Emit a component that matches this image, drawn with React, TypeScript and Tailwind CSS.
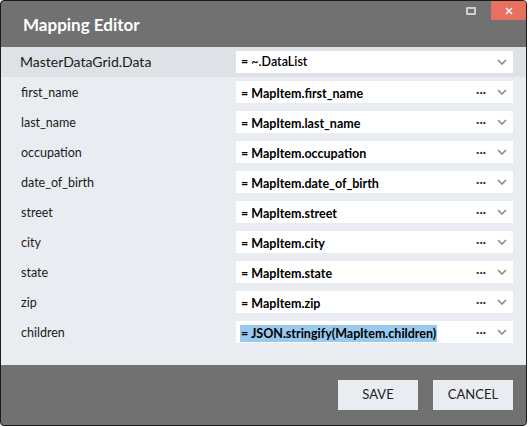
import React from "react";

const rows: { label: string; value: string; selected?: boolean }[] = [
  { label: "first_name", value: "= MapItem.first_name" },
  { label: "last_name", value: "= MapItem.last_name" },
  { label: "occupation", value: "= MapItem.occupation" },
  { label: "date_of_birth", value: "= MapItem.date_of_birth" },
  { label: "street", value: "= MapItem.street" },
  { label: "city", value: "= MapItem.city" },
  { label: "state", value: "= MapItem.state" },
  { label: "zip", value: "= MapItem.zip" },
  { label: "children", value: "= JSON.stringify(MapItem.children)", selected: true },
];

function Chevron() {
  return (
    <svg width="10" height="6" viewBox="0 0 10 6" className="shrink-0">
      <path d="M1 1 L5 5 L9 1" fill="none" stroke="#8a8a8a" strokeWidth="1.6" />
    </svg>
  );
}

export default function App() {
  return (
    <div className="w-[530px] h-[427px] bg-white" style={{ fontFamily: 'Lato, "Noto Sans", sans-serif' }}>
      <div className="w-[527px] h-[426px] border border-[#1c1c1c] rounded-[4px] overflow-hidden flex flex-col bg-[#717171]">
        <div className="h-[46px] flex items-start justify-between shrink-0">
          <div className="pl-[22px] pt-[14px] text-white font-bold text-[17px] leading-[20px]">Mapping Editor</div>
          <div className="flex items-start">
            <div className="w-[40px] h-[19px] flex items-center justify-center">
              <div className="w-[10px] h-[8px] border-2 border-[#cfcfcf] rounded-[1px]" />
            </div>
            <div className="w-[35px] h-[19px] bg-[#e8705f] flex items-center justify-center">
              <svg width="8" height="8" viewBox="0 0 8 8">
                <path d="M1 1 L7 7 M7 1 L1 7" stroke="white" strokeWidth="1.4" />
              </svg>
            </div>
          </div>
        </div>
        <div className="bg-[#e9ecf0] flex flex-col pb-[18px]">
          <div className="h-[30px] bg-[#dee1e5] flex items-center">
            <div className="w-[235px] pl-[19px] text-[14px] leading-[18px] text-[#1a1a1a]">MasterDataGrid.Data</div>
            <div className="w-[277px] h-[22px] bg-white flex items-center pl-[5px] pr-[6px]">
              <span className="flex-1 text-[12.5px] font-semibold text-black">= ~.DataList</span>
              <Chevron />
            </div>
          </div>
          {rows.map((r) => (
            <div key={r.label} className="h-[30px] flex items-center">
              <div className="w-[235px] pl-[20px] pt-[2px] text-[12.5px] leading-[16px] text-[#1a1a1a]">{r.label}</div>
              <div className="w-[277px] h-[22px] bg-white flex items-center pl-[4px] pr-[6px]">
                <div className="flex-1">
                  <span className={`text-[12.5px] font-bold text-black leading-[17px] inline-block ${r.selected ? "bg-[#99c9ef] pl-[1px] pr-[1px]" : "pl-[1px]"}`}>
                    {r.value}
                  </span>
                </div>
                <span className="text-[12px] text-[#333] font-bold mr-[11px] leading-none">···</span>
                <Chevron />
              </div>
            </div>
          ))}
        </div>
        <div className="flex-1 flex items-start justify-end pt-[15px] pr-[13px] gap-[15px]">
          <button className="w-[80px] h-[30px] bg-[#e9ecf0] text-[13px] text-[#222]">SAVE</button>
          <button className="w-[80px] h-[30px] bg-[#e9ecf0] text-[13px] text-[#222]">CANCEL</button>
        </div>
      </div>
    </div>
  );
}
